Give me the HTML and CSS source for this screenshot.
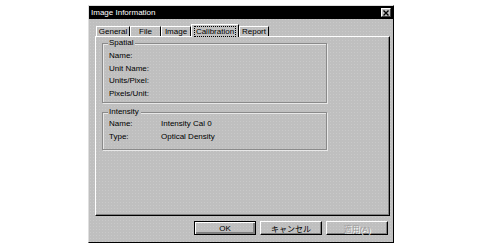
FILE: index.html
```html
<!DOCTYPE html>
<html lang="en">
<head>
    <meta charset="UTF-8">
    <title>Image Information</title>
    <link rel="stylesheet" href="styles.css">
</head>
<body>
    <div class="dialog">
        <div class="titlebar">
            <span class="title">Image Information</span>
            <span class="close">
                <svg width="6" height="6" viewBox="0 0 6 6">
                    <path d="M0.5 0.5 L5.5 5.5 M5.5 0.5 L0.5 5.5" stroke="#000" stroke-width="1.4"/>
                </svg>
            </span>
        </div>

        <div class="content">
            <div class="tabs">
                <div class="tab tab-general">General</div>
                <div class="tab tab-file">File</div>
                <div class="tab tab-image">Image</div>
                <div class="tab tab-calibration active"><span class="focus">Calibration</span></div>
                <div class="tab tab-report">Report</div>
            </div>

            <div class="panel">
                <div class="group group-spatial">
                    <span class="legend">Spatial</span>
                    <div class="row"><span class="label">Name:</span></div>
                    <div class="row"><span class="label">Unit Name:</span></div>
                    <div class="row"><span class="label">Units/Pixel:</span></div>
                    <div class="row"><span class="label">Pixels/Unit:</span></div>
                </div>

                <div class="group group-intensity">
                    <span class="legend">Intensity</span>
                    <div class="row"><span class="label">Name:</span><span>Intensity Cal 0</span></div>
                    <div class="row"><span class="label">Type:</span><span>Optical Density</span></div>
                </div>
            </div>

            <div class="buttons">
                <button class="btn default">OK</button>
                <button class="btn">キャンセル</button>
                <button class="btn disabled">適用(A)</button>
            </div>
        </div>
    </div>
</body>
</html>
```

FILE: styles.css
```css
/* Reset and global styles */
* {
    margin: 0;
    padding: 0;
    box-sizing: border-box;
}

body {
    font-family: "Liberation Sans", "Noto Sans CJK JP", sans-serif;
    font-size: 8px;
    color: #000;
    background-color: #ffffff;
}

/* Dialog window */
.dialog {
    width: 306px;
    height: 238px;
    margin: 5px 0 0 88px;
    display: flex;
    flex-direction: column;
    background-color: #bfbfbf;
    background-image: radial-gradient(circle, #c9c9c9 0.6px, transparent 0.8px);
    background-size: 3px 3px;
    border: 1px solid;
    border-color: #dfdfdf #000 #000 #dfdfdf;
}

.titlebar {
    height: 13px;
    background-color: #000;
    color: #fff;
    display: flex;
    align-items: center;
    justify-content: space-between;
    padding: 0 2px 0 2px;
}

.close {
    width: 10px;
    height: 9px;
    display: flex;
    align-items: center;
    justify-content: center;
    background-color: #c0c0c0;
    border: 1px solid;
    border-color: #fff #404040 #404040 #fff;
}

.content {
    flex: 1;
    display: flex;
    flex-direction: column;
    padding: 5px 3px 0 6px;
}

/* Tabs */
.tabs {
    height: 12px;
    display: flex;
    align-items: flex-end;
    padding-left: 1px;
}

.tab {
    height: 10px;
    line-height: 9px;
    text-align: center;
    border-top: 1px solid #fff;
    border-left: 1px solid #fff;
    border-right: 1px solid #000;
}

.tab-general { width: 34px; }
.tab-file { width: 31px; }
.tab-image { width: 30px; }
.tab-calibration { width: 48px; }
.tab-report { width: 30px; }

.tab.active {
    height: 13px;
    margin-bottom: -1px;
    padding-top: 1px;
    position: relative;
    z-index: 1;
    background-color: #bfbfbf;
}

.focus {
    display: inline-block;
    padding: 0 1px;
    line-height: 9px;
    border: 1px dotted #000;
}

/* Tab page */
.panel {
    height: 180px;
    padding: 6px 0 0 6px;
    border: 1px solid;
    border-color: #fff #000 #000 #fff;
    box-shadow: inset -1px -1px 0 #808080;
}

.group {
    position: relative;
    width: 225px;
    border: 1px solid #8a8a8a;
    box-shadow: 1px 1px 0 #e8e8e8, inset 1px 1px 0 #e8e8e8;
    padding-left: 6px;
}

.group-spatial {
    height: 60px;
    padding-top: 6px;
}

.group-spatial .row {
    line-height: 12.5px;
}

.group-intensity {
    height: 38px;
    margin-top: 9px;
    padding-top: 4px;
}

.group-intensity .row {
    line-height: 13px;
}

.legend {
    position: absolute;
    top: -6px;
    left: 5px;
    padding: 0 2px 0 1px;
    line-height: 10px;
    background-color: #bfbfbf;
}

.row {
    display: flex;
}

.label {
    width: 52px;
}

/* Buttons */
.buttons {
    display: flex;
    justify-content: flex-end;
    gap: 4px;
    margin-top: 5px;
    padding-right: 2px;
}

.btn {
    width: 62px;
    height: 14px;
    display: flex;
    align-items: center;
    justify-content: center;
    font: inherit;
    color: #000;
    background: transparent;
    border: 1px solid;
    border-color: #fff #000 #000 #fff;
    box-shadow: inset -1px -1px 0 #808080;
}

.btn.default {
    border-color: #000;
    box-shadow: inset 1px 1px 0 #fff, inset -2px -2px 0 #808080;
}

.btn.disabled {
    color: #999;
    text-shadow: 1px 1px 0 #fff;
}
```
